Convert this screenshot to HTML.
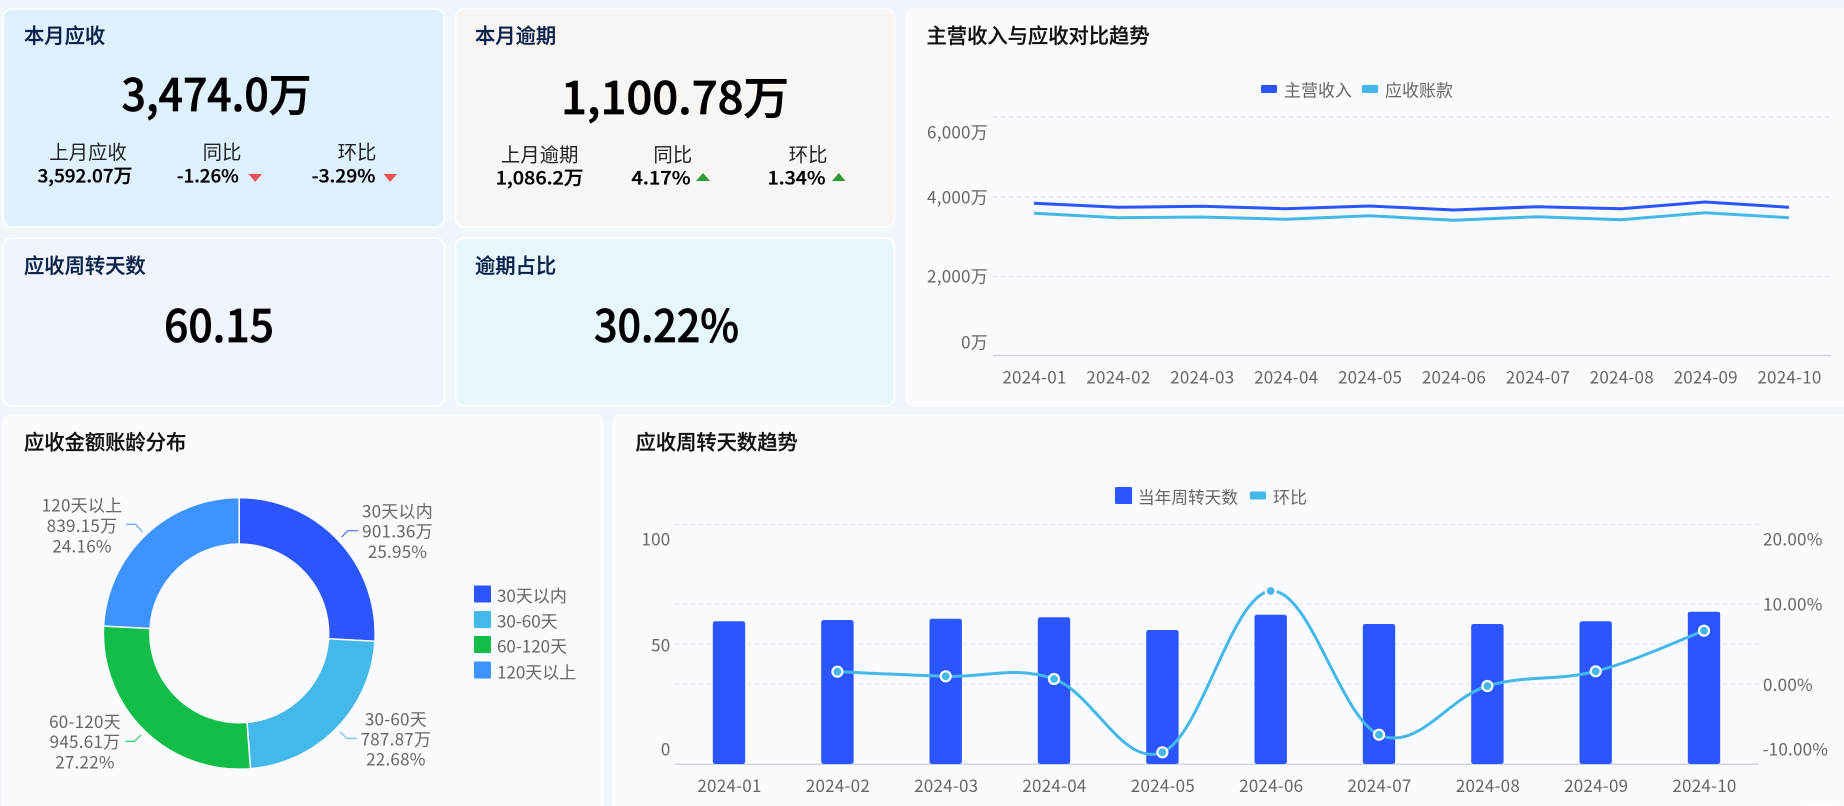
<!DOCTYPE html>
<html lang="zh"><head><meta charset="utf-8"><title>应收看板</title>
<style>
html,body{margin:0;padding:0;width:1844px;height:806px;overflow:hidden;background:#f1f5fc}
svg{display:block;font-family:"Noto Sans CJK SC","Liberation Sans",sans-serif}
text{dominant-baseline:central}
.t{font-size:20.300px;font-weight:500;fill:#0b2149;stroke:#0b2149;stroke-width:.25}
.tb{font-size:20.300px;font-weight:500;fill:#111;stroke:#111;stroke-width:.25}
.big{font-size:45px;font-weight:500;fill:#000;stroke:#000;stroke-width:.7;text-anchor:middle}
.sl{font-size:19.400px;fill:#222;text-anchor:middle}
.sv{font-size:18.500px;font-weight:500;fill:#000;stroke:#000;stroke-width:.3}
.c{font-size:17px;fill:#666;transform:translateY(-1px)}
.m{text-anchor:middle}.e{text-anchor:end}
.d{letter-spacing:.25px}
.g{stroke:#e8eaef;stroke-width:1.500;stroke-dasharray:4 4;fill:none}
.b{fill:#2b55ff}
.dot{fill:#45b8ea;stroke:#fff;stroke-width:2.200}
</style></head><body>
<svg width="1844" height="806" viewBox="0 0 1844 806" xmlns="http://www.w3.org/2000/svg">
<!-- cards -->
<rect x="3" y="9" width="441.500" height="218" rx="9" fill="#dff1fe" stroke="#fbfdff" stroke-width="2"/>
<rect x="455.500" y="9" width="439" height="218" rx="9" fill="#f9f5f2" stroke="#fdfdfe" stroke-width="2"/>
<rect x="3" y="238" width="441.500" height="168" rx="9" fill="#eff4fe" stroke="#fbfdff" stroke-width="2"/>
<rect x="455.500" y="238" width="439" height="168" rx="9" fill="#e8f6fd" stroke="#fbfdff" stroke-width="2"/>
<path d="M1844 8H913a8 8 0 0 0-8 8V399a8 8 0 0 0 8 8H1844Z" fill="#fafbff"/>
<path d="M2 806V422a8 8 0 0 1 8-8H596a8 8 0 0 1 8 8V806Z" fill="#fafbff"/>
<path d="M612 806V422a8 8 0 0 1 8-8H1844V806Z" fill="#fafbff"/>
<path d="M1800 806Q1820 800 1840 806Z" fill="#fff"/>

<!-- KPI titles -->
<text class="t" x="24" y="34">本月应收</text>
<text class="t" x="475" y="34">本月逾期</text>
<text class="t" x="24" y="264">应收周转天数</text>
<text class="t" x="475" y="264">逾期占比</text>

<!-- KPI values -->
<text class="big" x="216.500" y="91.500" textLength="190" lengthAdjust="spacingAndGlyphs">3,474.0万</text>
<text class="big" x="675" y="94.500" textLength="228" lengthAdjust="spacingAndGlyphs">1,100.78万</text>
<text class="big" x="219" y="322.500" textLength="110" lengthAdjust="spacingAndGlyphs">60.15</text>
<text class="big" x="666.500" y="322.500" textLength="145" lengthAdjust="spacingAndGlyphs">30.22%</text>

<!-- sub stats card 1 -->
<text class="sl" x="88" y="150.500">上月应收</text>
<text class="sv m" x="85" y="175.500" textLength="95" lengthAdjust="spacingAndGlyphs">3,592.07万</text>
<text class="sl" x="222" y="150.500">同比</text>
<text class="sv" x="176.800" y="175.500" textLength="62" lengthAdjust="spacingAndGlyphs">-1.26%</text>
<polygon points="248.500,174 262,174 255.200,182" fill="#e65454"/>
<text class="sl" x="357" y="150.500">环比</text>
<text class="sv" x="311.700" y="175.500" textLength="63.700" lengthAdjust="spacingAndGlyphs">-3.29%</text>
<polygon points="383.500,174 397,174 390.200,182" fill="#e65454"/>

<!-- sub stats card 2 -->
<text class="sl" x="539.600" y="153">上月逾期</text>
<text class="sv m" x="539.600" y="177.500" textLength="88" lengthAdjust="spacingAndGlyphs">1,086.2万</text>
<text class="sl" x="672.800" y="153">同比</text>
<text class="sv" x="631.500" y="177.500" textLength="59" lengthAdjust="spacingAndGlyphs">4.17%</text>
<polygon points="696,181 710,181 703,173" fill="#2a9a35"/>
<text class="sl" x="808" y="153">环比</text>
<text class="sv" x="767.500" y="177.500" textLength="58" lengthAdjust="spacingAndGlyphs">1.34%</text>
<polygon points="832,181 845.600,181 838.800,173" fill="#2a9a35"/>

<!-- line chart -->
<text class="tb" x="926.500" y="34">主营收入与应收对比趋势</text>
<rect x="1261" y="85" width="16" height="8" rx="1" fill="#2b55ff"/>
<text class="c" x="1284" y="90">主营收入</text>
<rect x="1362" y="85" width="16" height="8" rx="1" fill="#45b8ea"/>
<text class="c" x="1385" y="90">应收账款</text>
<line class="g" x1="993" y1="117" x2="1831" y2="117"/>
<line class="g" x1="993" y1="197" x2="1831" y2="197"/>
<line class="g" x1="993" y1="276.500" x2="1831" y2="276.500"/>
<line x1="993" y1="355.500" x2="1831" y2="355.500" stroke="#d2d4da" stroke-width="1.500"/>
<text class="c e d" x="988" y="132">6,000万</text>
<text class="c e d" x="988" y="197">4,000万</text>
<text class="c e d" x="988" y="276">2,000万</text>
<text class="c e d" x="988" y="342">0万</text>
<polyline fill="none" stroke="#2b55ff" stroke-width="3" points="1034,203.300 1117.900,207.300 1201.800,206.300 1285.700,208.700 1369.600,206 1453.500,210 1537.400,206.700 1621.300,208.700 1705.200,202 1789,207.300"/>
<polyline fill="none" stroke="#45b8ea" stroke-width="3" points="1034,213.300 1117.900,217.700 1201.800,217 1285.700,219.300 1369.600,215.700 1453.500,220.300 1537.400,216.700 1621.300,219.700 1705.200,212.700 1789,217.700"/>
<g class="c m d">
<text x="1034.500" y="377">2024-01</text><text x="1118.400" y="377">2024-02</text><text x="1202.300" y="377">2024-03</text><text x="1286.200" y="377">2024-04</text><text x="1370.100" y="377">2024-05</text><text x="1454" y="377">2024-06</text><text x="1537.900" y="377">2024-07</text><text x="1621.800" y="377">2024-08</text><text x="1705.700" y="377">2024-09</text><text x="1789.500" y="377">2024-10</text>
</g>

<!-- donut -->
<text class="tb" x="24" y="440.500">应收金额账龄分布</text>
<g stroke="#fafbff" stroke-width="1.500">
<path d="M239.200 497.600A135.800 135.800 0 0 1 374.900 641.300L328.500 638.800A89.400 89.400 0 0 0 239.200 544Z" fill="#2b55ff"/>
<path d="M374.900 641.300A135.800 135.800 0 0 1 250.500 768.700L247 722.400A89.400 89.400 0 0 0 328.500 638.800Z" fill="#45b8ea"/>
<path d="M250.500 768.700A135.800 135.800 0 0 1 103.600 626L150 628.500A89.400 89.400 0 0 0 247 722.400Z" fill="#13be48"/>
<path d="M103.600 626A135.800 135.800 0 0 1 239.200 497.600L239.200 544A89.400 89.400 0 0 0 150 628.500Z" fill="#3d93ff"/>
</g>
<polyline points="341.600,537 348,530.700 358,530.700" fill="none" stroke="#2b55ff" stroke-width="1"/>
<polyline points="340,731.700 346.800,738.300 356.700,738.300" fill="none" stroke="#45b8ea" stroke-width="1"/>
<polyline points="141,735 134.400,741.300 125,741.300" fill="none" stroke="#13be48" stroke-width="1"/>
<polyline points="142.400,531.700 135.600,524.300 126,524.300" fill="none" stroke="#3d93ff" stroke-width="1"/>
<g class="c m d">
<text x="397.500" y="511">30天以内</text><text x="397.500" y="531">901.36万</text><text x="397.500" y="551.500">25.95%</text>
<text x="395.900" y="719">30-60天</text><text x="395.900" y="739">787.87万</text><text x="395.900" y="759">22.68%</text>
<text x="85" y="721.500">60-120天</text><text x="85" y="741.500">945.61万</text><text x="85" y="762">27.22%</text>
<text x="82" y="505">120天以上</text><text x="82" y="525.500">839.15万</text><text x="82" y="546">24.16%</text>
</g>
<rect x="474" y="585.500" width="17" height="17" rx="1" fill="#2b55ff"/>
<rect x="474" y="611" width="17" height="17" rx="1" fill="#45b8ea"/>
<rect x="474" y="636" width="17" height="17" rx="1" fill="#13be48"/>
<rect x="474" y="661.500" width="17" height="17" rx="1" fill="#3d93ff"/>
<text class="c" x="497" y="595.500">30天以内</text>
<text class="c" x="497" y="621">30-60天</text>
<text class="c" x="497" y="646">60-120天</text>
<text class="c" x="497" y="672">120天以上</text>

<!-- bar chart -->
<text class="tb" x="635.500" y="440.500">应收周转天数趋势</text>
<rect x="1115" y="487" width="17" height="17" rx="1" fill="#2b55ff"/>
<text class="c" x="1138" y="497" textLength="100" lengthAdjust="spacingAndGlyphs">当年周转天数</text>
<rect x="1250" y="491.500" width="16" height="8" rx="1" fill="#45b8ea"/>
<text class="c" x="1273" y="497">环比</text>
<line class="g" x1="675" y1="524.500" x2="1758.500" y2="524.500"/>
<line class="g" x1="675" y1="604" x2="1758.500" y2="604"/>
<line class="g" x1="675" y1="644" x2="1758.500" y2="644"/>
<line class="g" x1="675" y1="684" x2="1758.500" y2="684"/>
<line x1="675" y1="764.300" x2="1758.500" y2="764.300" stroke="#d2d4da" stroke-width="1.500"/>
<text class="c e d" x="670.500" y="539">100</text>
<text class="c e d" x="670.500" y="645">50</text>
<text class="c e d" x="670.500" y="749">0</text>
<text class="c d" x="1763" y="539">20.00%</text>
<text class="c d" x="1763" y="604">10.00%</text>
<text class="c d" x="1763" y="684.500">0.00%</text>
<text class="c d" x="1762.500" y="749">-10.00%</text>
<g class="b">
<rect x="712.800" y="621.300" width="32.400" height="142.700" rx="2.500"/>
<rect x="821.200" y="620" width="32.400" height="144" rx="2.500"/>
<rect x="929.500" y="618.700" width="32.400" height="145.300" rx="2.500"/>
<rect x="1037.800" y="617.300" width="32.400" height="146.700" rx="2.500"/>
<rect x="1146.200" y="630" width="32.400" height="134" rx="2.500"/>
<rect x="1254.500" y="614.700" width="32.400" height="149.300" rx="2.500"/>
<rect x="1362.800" y="624" width="32.400" height="140" rx="2.500"/>
<rect x="1471.200" y="624" width="32.400" height="140" rx="2.500"/>
<rect x="1579.500" y="621.300" width="32.400" height="142.700" rx="2.500"/>
<rect x="1687.800" y="611.700" width="32.400" height="152.300" rx="2.500"/>
</g>
<path fill="none" stroke="#45b8ea" stroke-width="3" d="M837.400 671.700C856.900 672.500 906.700 675 945.700 676.300C984.700 677.600 1015 665.300 1054 679C1093 692.700 1123.400 768.100 1162.400 752.300C1201.400 736.500 1231.700 594.200 1270.700 591C1309.700 587.800 1340 717.600 1379 734.700C1418 751.800 1448.400 697.400 1487.400 686C1526.400 674.600 1556.700 681.300 1595.700 671.300C1634.700 661.300 1684.500 638 1704 630.700"/>
<circle class="dot" cx="837.400" cy="671.700" r="5"/>
<circle class="dot" cx="945.700" cy="676.300" r="5"/>
<circle class="dot" cx="1054" cy="679" r="5"/>
<circle class="dot" cx="1162.400" cy="752.300" r="5"/>
<circle class="dot" cx="1270.700" cy="591" r="5"/>
<circle class="dot" cx="1379" cy="734.700" r="5"/>
<circle class="dot" cx="1487.400" cy="686" r="5"/>
<circle class="dot" cx="1595.700" cy="671.300" r="5"/>
<circle class="dot" cx="1704" cy="630.700" r="5"/>
<g class="c m d">
<text x="729.500" y="785.500">2024-01</text><text x="837.900" y="785.500">2024-02</text><text x="946.200" y="785.500">2024-03</text><text x="1054.500" y="785.500">2024-04</text><text x="1162.900" y="785.500">2024-05</text><text x="1271.200" y="785.500">2024-06</text><text x="1379.500" y="785.500">2024-07</text><text x="1487.900" y="785.500">2024-08</text><text x="1596.200" y="785.500">2024-09</text><text x="1704.500" y="785.500">2024-10</text>
</g>
</svg>
</body></html>
